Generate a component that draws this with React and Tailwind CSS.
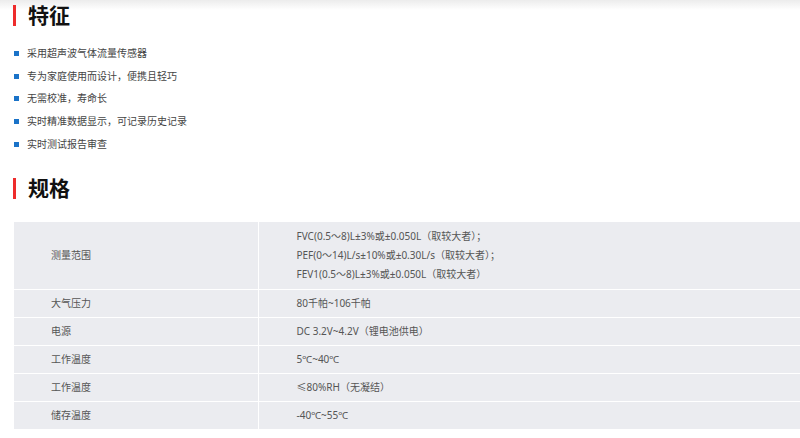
import React from "react";

const features = [
  "采用超声波气体流量传感器",
  "专为家庭使用而设计，便携且轻巧",
  "无需校准，寿命长",
  "实时精准数据显示，可记录历史记录",
  "实时测试报告审查",
];

const specs = [
  {
    label: "测量范围",
    values: [
      "FVC(0.5～8)L±3%或±0.050L（取较大者）；",
      "PEF(0～14)L/s±10%或±0.30L/s（取较大者）；",
      "FEV1(0.5～8)L±3%或±0.050L（取较大者）",
    ],
  },
  { label: "大气压力", values: ["80千帕~106千帕"] },
  { label: "电源", values: ["DC 3.2V~4.2V（锂电池供电）"] },
  { label: "工作温度", values: ["5℃~40℃"] },
  { label: "工作温度", values: ["≤80%RH（无凝结）"] },
  { label: "储存温度", values: ["-40℃~55℃"] },
];

const SectionTitle = ({ children }) => (
  <div className="flex items-center h-[30px]">
    <div className="ml-[13px] w-[3px] h-[21px] bg-[#ee2c2c]" />
    <h2 className="ml-[12px] text-[21px] leading-none font-bold text-[#111]">
      {children}
    </h2>
  </div>
);

export default function App() {
  return (
    <div
      className="w-[800px] h-[438px] overflow-hidden bg-[linear-gradient(to_bottom,#ececec,#ffffff_10px)]"
      style={{ fontFamily: '"Noto Sans", "Noto Sans CJK SC", sans-serif' }}
    >
      {/* 特征 */}
      <SectionTitle>特征</SectionTitle>
      <ul className="mt-[12px]">
        {features.map((f) => (
          <li key={f} className="flex items-center h-[22.75px]">
            <span className="ml-[14px] w-[5px] h-[5px] bg-[#1a73c8]" />
            <span className="ml-[8px] text-[10px] text-[#444]">{f}</span>
          </li>
        ))}
      </ul>

      {/* 规格 */}
      <div className="mt-[18px]">
        <SectionTitle>规格</SectionTitle>
      </div>
      <table className="mt-[18px] ml-[14px] w-[800px] border-collapse text-[10px] text-[#555]">
        <tbody>
          {specs.map((row, i) => (
            <tr key={i} className="bg-[#ebecf0] border-b border-white">
              <td className="w-[244px] pl-[37px] border-r border-white">
                {row.label}
              </td>
              <td className="pl-[38px]">
                <div className={row.values.length > 1 ? "py-[5px]" : ""}>
                  {row.values.map((v) => (
                    <div
                      key={v}
                      className={
                        row.values.length > 1
                          ? "leading-[19px]"
                          : "leading-[27px]"
                      }
                    >
                      {v}
                    </div>
                  ))}
                </div>
              </td>
            </tr>
          ))}
        </tbody>
      </table>
    </div>
  );
}
